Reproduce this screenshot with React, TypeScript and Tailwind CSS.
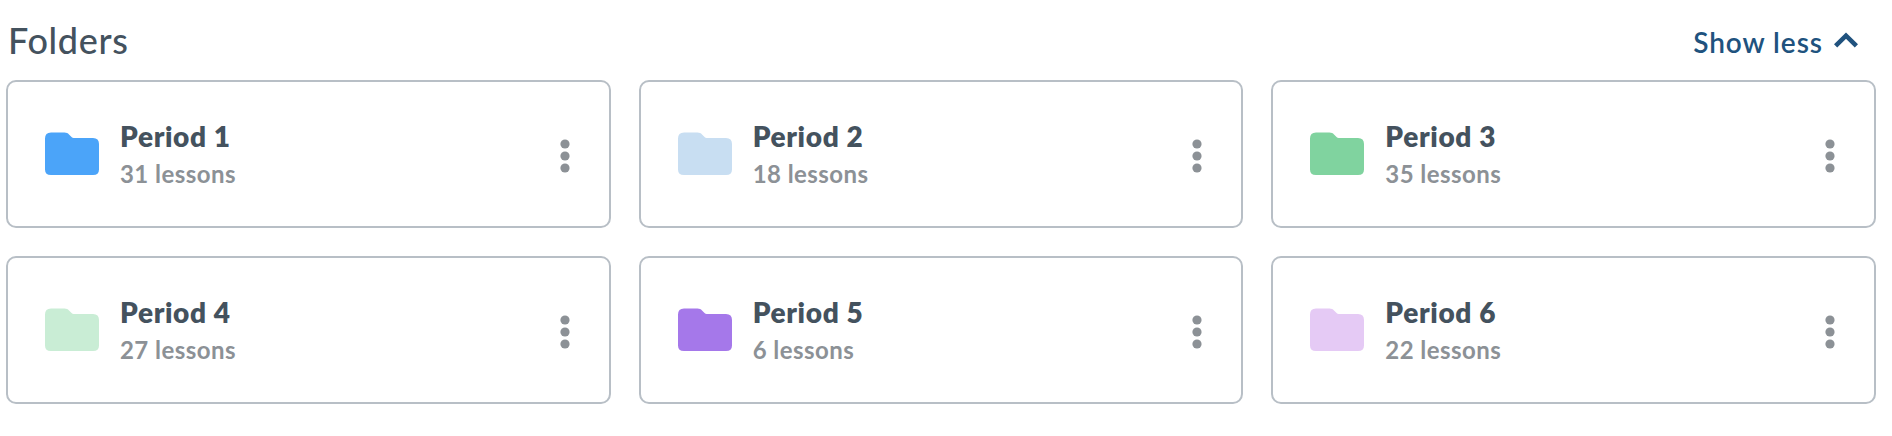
import { useState } from 'react'

interface Folder {
  name: string
  lessons: number
  color: string
}

const folders: Folder[] = [
  { name: 'Period 1', lessons: 31, color: 'text-[#4ba4f9]' },
  { name: 'Period 2', lessons: 18, color: 'text-[#c8def2]' },
  { name: 'Period 3', lessons: 35, color: 'text-[#80d39f]' },
  { name: 'Period 4', lessons: 27, color: 'text-[#c9edd5]' },
  { name: 'Period 5', lessons: 6, color: 'text-[#a578ea]' },
  { name: 'Period 6', lessons: 22, color: 'text-[#e5caf5]' },
]

function FolderIcon({ className }: { className: string }) {
  return (
    <svg width="54" height="44" viewBox="0 0 54 44" fill="currentColor" className={className}>
      <path d="M6 0.5H19.5C21.5 0.5 22.8 1.2 24 2.4L26.8 5.2C27.4 5.8 27.8 6 28.6 6H48Q54 6 54 12V37.5Q54 43 48 43H6Q0 43 0 37.5V6.5Q0 0.5 6 0.5Z" />
    </svg>
  )
}

function FolderCard({ folder }: { folder: Folder }) {
  return (
    <div className="flex h-[148px] items-center rounded-[10px] border-2 border-[#b8bfc6] bg-white pr-[39px] pl-[37px]">
      <FolderIcon className={folder.color} />
      <div className="ml-[21px] flex-1">
        <h3 className="text-[28px] leading-[38px] font-extrabold tracking-[0.65px] text-[#44525e]">{folder.name}</h3>
        <p className="pt-px text-2xl leading-9 font-bold tracking-[0.45px] text-[#8c9196]">{folder.lessons} lessons</p>
      </div>
      <button aria-label="Folder options" className="pt-[3px] text-[#8c9196]">
        <svg width="10" height="34" viewBox="0 0 10 34" fill="currentColor">
          <circle cx="5" cy="5" r="4.6" />
          <circle cx="5" cy="17" r="4.6" />
          <circle cx="5" cy="29" r="4.6" />
        </svg>
      </button>
    </div>
  )
}

export default function App() {
  const [expanded, setExpanded] = useState(true)

  return (
    <main className="h-[436px] bg-white pr-4 pl-1.5 font-['Lato','Open_Sans',sans-serif]">
      <div className="flex h-20 items-center justify-between pr-[18px] pl-[2px]">
        <h2 className="text-[36px] leading-[48px] font-medium tracking-[0.65px] text-[#44525e]">Folders</h2>
        <button
          onClick={() => setExpanded(!expanded)}
          className="flex items-center gap-[11px] text-[28px] font-semibold text-[#20527e]"
        >
          <span className="pt-[3px] tracking-[0.95px]">{expanded ? 'Show less' : 'Show more'}</span>
          <svg width="24" height="16" viewBox="0 0 24 16" fill="none" stroke="currentColor" strokeWidth="4.6">
            <path d="M1.6 13.8L12 3.6L22.4 13.8" />
          </svg>
        </button>
      </div>
      {expanded && (
        <div className="grid grid-cols-3 gap-7">
          {folders.map((folder) => (
            <FolderCard key={folder.name} folder={folder} />
          ))}
        </div>
      )}
    </main>
  )
}
